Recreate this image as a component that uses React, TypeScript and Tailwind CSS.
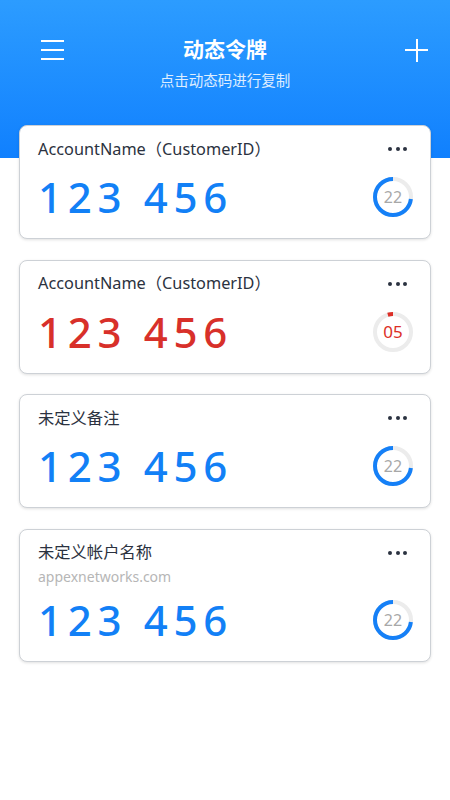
import React from "react";

type Token = {
  title: string;
  sub?: string;
  code: string;
  left: number;
  red?: boolean;
};

const tokens: Token[] = [
  { title: "AccountName（CustomerID）", code: "123 456", left: 22 },
  { title: "AccountName（CustomerID）", code: "123 456", left: 5, red: true },
  { title: "未定义备注", code: "123 456", left: 22 },
  { title: "未定义帐户名称", sub: "appexnetworks.com", code: "123 456", left: 22 },
];

const Timer = ({ left, red }: { left: number; red?: boolean }) => {
  const c = 2 * Math.PI * 18;
  const len = red ? 6 : (c * left) / 30;
  return (
    <div className="relative w-[40px] h-[40px] flex items-center justify-center">
      <svg width="40" height="40" viewBox="0 0 40 40" className="absolute inset-0">
        <circle cx="20" cy="20" r="18" fill="none" stroke="#ececec" strokeWidth="4" />
        <circle
          cx="20"
          cy="20"
          r="18"
          fill="none"
          stroke={red ? "#dc2f27" : "#1580f7"}
          strokeWidth="4"
          strokeDasharray={`${len} ${c}`}
          strokeDashoffset={-(c - len)}
          transform="rotate(-90 20 20)"
        />
      </svg>
      <span className={red ? "relative text-[17px] text-[#dc2f27]" : "relative text-[16px] text-[#a8a8a8]"}>
        {red ? "05" : String(left)}
      </span>
    </div>
  );
};

const Dots = () => (
  <div className="flex gap-[3.5px]">
    <span className="w-[4px] h-[4px] rounded-full bg-[#2b3240]" />
    <span className="w-[4px] h-[4px] rounded-full bg-[#2b3240]" />
    <span className="w-[4px] h-[4px] rounded-full bg-[#2b3240]" />
  </div>
);

const TokenCard = ({ t }: { t: Token }) => (
  <div className="bg-white rounded-[8px] border border-[#cdd1d6] shadow-[0_1px_3px_rgba(0,0,0,0.12)] pt-[12px] pb-[20px]">
    <div className="flex items-center justify-between pl-[18px] pr-[23px] h-[22px]">
      <span className="text-[16.3px] text-[#2b3240]">{t.title}</span>
      <Dots />
    </div>
    {t.sub && (
      <div className="pl-[18px] h-[22px] mt-[2px] flex items-center text-[14px] text-[#b6b6b6]">{t.sub}</div>
    )}
    <div className={`flex items-center justify-between pl-[18px] pr-[17px] h-[42px] ${t.sub ? "mt-[11px]" : "mt-[16px]"}`}>
      <span
        className={`text-[42px] leading-none font-medium tracking-[5.7px] ${t.red ? "text-[#d8302a]" : "text-[#1280f6]"}`}
      >
        {t.code}
      </span>
      <Timer left={t.left} red={t.red} />
    </div>
  </div>
);

export default function App() {
  return (
    <div
      className="w-full min-h-[800px] bg-white"
      style={{ fontFamily: '"Noto Sans", "Noto Sans CJK SC", sans-serif' }}
    >
      <div className="h-[158px] bg-gradient-to-b from-[#2c9cff] to-[#1080fe] pt-[30px]">
        <div className="grid grid-cols-[1fr_auto_1fr] items-center px-[22px] h-[40px]">
          <div className="flex flex-col gap-[7px] w-[23px] ml-[19px]">
            <span className="h-[2px] bg-white" />
            <span className="h-[2px] bg-white" />
            <span className="h-[2px] bg-white" />
          </div>
          <span className="text-[21px] font-bold text-white">动态令牌</span>
          <div className="relative w-[23px] h-[23px] justify-self-end">
            <span className="absolute left-0 right-0 top-[10.5px] h-[2px] bg-white" />
            <span className="absolute top-0 bottom-0 left-[10.5px] w-[2px] bg-white" />
          </div>
        </div>
        <div className="text-center text-[14.5px] text-white/85">点击动态码进行复制</div>
      </div>
      <div className="flex flex-col gap-[20.5px] px-[19px] -mt-[33px]">
        {tokens.map((t, i) => (
          <TokenCard key={i} t={t} />
        ))}
      </div>
    </div>
  );
}
